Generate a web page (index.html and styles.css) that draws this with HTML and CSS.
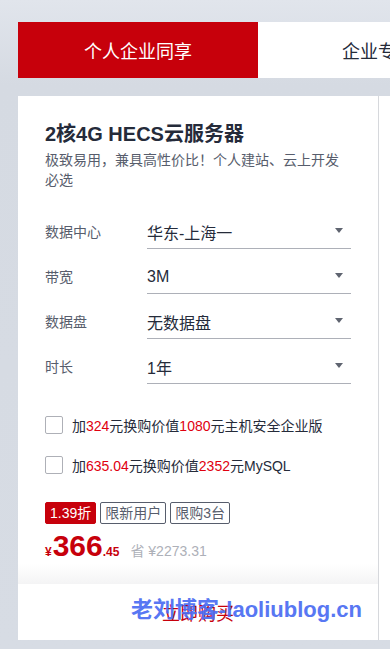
FILE: index.html
```html
<!DOCTYPE html>
<html lang="zh-CN">
<head>
<meta charset="utf-8">
<title>HECS</title>
<link rel="stylesheet" href="styles.css">
</head>
<body>
<div class="page">
  <div class="tabs">
    <div class="tab active">个人企业同享</div>
    <div class="tab">企业专享</div>
  </div>
  <div class="cards">
    <div class="card">
      <div class="body">
        <div class="title">2核4G HECS云服务器</div>
        <div class="desc">极致易用，兼具高性价比！个人建站、云上开发必选</div>
        <div class="form">
          <div class="row"><span class="label">数据中心</span><div class="select"><span>华东-上海一</span><i class="arrow"></i></div></div>
          <div class="row"><span class="label">带宽</span><div class="select"><span>3M</span><i class="arrow"></i></div></div>
          <div class="row"><span class="label">数据盘</span><div class="select"><span>无数据盘</span><i class="arrow"></i></div></div>
          <div class="row"><span class="label">时长</span><div class="select"><span>1年</span><i class="arrow"></i></div></div>
        </div>
        <div class="checks">
          <label class="check"><span class="box"></span><span>加<em>324</em>元换购价值<em>1080</em>元主机安全企业版</span></label>
          <label class="check"><span class="box"></span><span>加<em>635.04</em>元换购价值<em>2352</em>元MySQL</span></label>
        </div>
        <div class="tags">
          <span class="tag discount">1.39折</span>
          <span class="tag">限新用户</span>
          <span class="tag">限购3台</span>
        </div>
        <div class="price">
          <span class="yen">¥</span><span class="int">366</span><span class="dec">.45</span>
          <span class="save">省 ¥2273.31</span>
        </div>
      </div>
      <div class="fade"></div>
      <div class="footer">
        <span class="buy">立即购买</span>
        <span class="watermark">老刘博客-laoliublog.cn</span>
      </div>
    </div>
    <div class="card next"></div>
  </div>
</div>
</body>
</html>
```

FILE: styles.css
```css
* { box-sizing: border-box; }
html, body {
  margin: 0;
  padding: 0;
}
body {
  width: 390px;
  height: 649px;
  overflow: hidden;
  font-family: "Liberation Sans", "Noto Sans CJK SC", sans-serif;
  color: #252b3a;
  background: linear-gradient(180deg, #e1e5ec 0px, #d5dae2 85px, #d7dce4 100%);
}
.page {
  padding: 22px 0 0 18px;
}
.tabs {
  display: flex;
  height: 56px;
  width: 600px;
}
.tab {
  width: 240px;
  flex: none;
  background: #fff;
  display: flex;
  align-items: center;
  justify-content: center;
  font-size: 18px;
  color: #252b3a;
}
.tab.active {
  background: #c7000b;
  color: #fff;
}
.cards {
  display: flex;
  margin-top: 18px;
  width: 800px;
}
.card {
  width: 361px;
  height: 544px;
  flex: none;
  background: #fff;
  border-right: 1px solid #d6d8dc;
  display: flex;
  flex-direction: column;
}
.card.next {
  border-right: none;
}
.body {
  padding: 24px 27px 0 27px;
}
.title {
  font-size: 20px;
  font-weight: bold;
  line-height: 28px;
  color: #252b3a;
}
.desc {
  margin-top: 2px;
  font-size: 14px;
  line-height: 20px;
  color: #575d6c;
}
.form {
  margin-top: 23px;
  display: flex;
  flex-direction: column;
  gap: 9px;
}
.row {
  display: flex;
  align-items: center;
  height: 36px;
}
.label {
  width: 102px;
  flex: none;
  font-size: 14px;
  color: #575d6c;
}
.select {
  flex: 1;
  height: 36px;
  border-bottom: 1px solid #adb0b8;
  display: flex;
  align-items: center;
  justify-content: space-between;
  padding-top: 3px;
  font-size: 16px;
  color: #252b3a;
}
.arrow {
  width: 0;
  height: 0;
  border-left: 4.5px solid transparent;
  border-right: 4.5px solid transparent;
  border-top: 5px solid #5f6470;
  margin-right: 8px;
  margin-top: -4px;
}
.checks {
  margin-top: 31px;
  display: flex;
  flex-direction: column;
  gap: 20px;
}
.check {
  display: flex;
  align-items: center;
  height: 20px;
  font-size: 14px;
  color: #252b3a;
}
.check em {
  font-style: normal;
  color: #e0000f;
}
.box {
  width: 18px;
  height: 18px;
  border: 1px solid #aeb0b7;
  border-radius: 2px;
  margin-right: 9px;
  flex: none;
}
.tags {
  margin-top: 27px;
  display: flex;
  gap: 4px;
}
.tag {
  height: 22px;
  line-height: 20px;
  padding: 0 4px;
  border: 1px solid #575d6c;
  border-radius: 2px;
  font-size: 14px;
  color: #575d6c;
}
.tag.discount {
  background: #c7000b;
  border-color: #c7000b;
  color: #fff;
}
.price {
  margin-top: 4px;
  height: 36px;
  line-height: 36px;
  display: flex;
  align-items: baseline;
  color: #c7000b;
  font-weight: bold;
}
.yen {
  font-size: 12px;
  margin-right: 1px;
}
.int {
  font-size: 30px;
}
.dec {
  font-size: 12px;
}
.save {
  margin-left: 11px;
  font-size: 14px;
  font-weight: normal;
  color: #adb0b8;
}
.fade {
  margin-top: auto;
  height: 20px;
  background: linear-gradient(180deg, #ffffff 0%, #f4f4f5 100%);
}
.footer {
  position: relative;
  height: 56px;
  display: flex;
  align-items: center;
  justify-content: center;
}
.buy {
  font-size: 18px;
  color: #c7000b;
}
.watermark {
  position: absolute;
  left: 113px;
  top: 13px;
  line-height: 26px;
  font-size: 22px;
  font-weight: bold;
  color: #4a6cf2;
  opacity: 0.92;
  white-space: nowrap;
}
```
